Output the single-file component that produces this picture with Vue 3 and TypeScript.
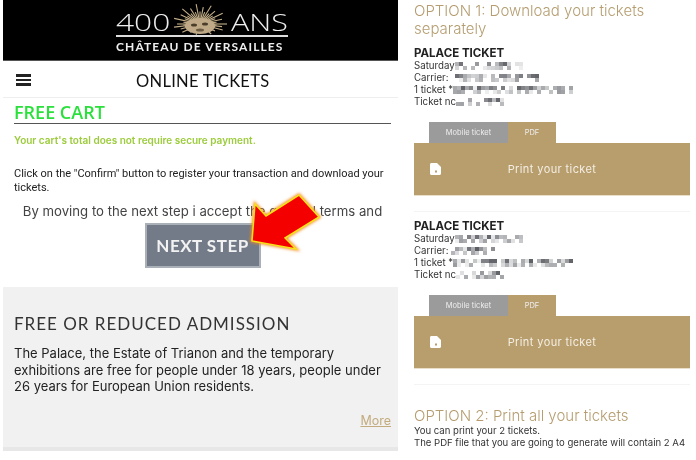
<script setup lang="ts">
interface Cell { x: number; y: number; o: number }
interface Line { label: string; width: number; cells: Cell[] }
interface Ticket { id: number; lines: Line[] }

function mosaic(seed: number, width: number): Cell[] {
  const cells: Cell[] = []
  let s = seed
  for (const y of [2, 6]) {
    for (let x = 0; x < width; x += 4) {
      s = (s * 9301 + 49297) % 233280
      const r = s / 233280
      if (r > 0.4) cells.push({ x, y, o: 0.08 + (r - 0.4) * (y === 2 ? 1.2 : 0.7) })
    }
  }
  return cells
}

const tickets: Ticket[] = [
  { id: 1, lines: [
    { label: 'Saturday', width: 68, cells: mosaic(11, 68) },
    { label: 'Carrier: ', width: 88, cells: mosaic(23, 88) },
    { label: '1 ticket *', width: 120, cells: mosaic(37, 120) },
    { label: 'Ticket nc', width: 48, cells: mosaic(51, 48) },
  ] },
  { id: 2, lines: [
    { label: 'Saturday', width: 68, cells: mosaic(61, 68) },
    { label: 'Carrier: ', width: 44, cells: mosaic(73, 44) },
    { label: '1 ticket *', width: 120, cells: mosaic(87, 120) },
    { label: 'Ticket nc', width: 48, cells: mosaic(99, 48) },
  ] },
]

const rays = Array.from({ length: 44 }, (_, i) => {
  const a = (Math.PI * 2 * i) / 44
  const r = i % 2 ? 0.62 : i % 4 ? 0.85 : 1
  const sin = Math.sin(a)
  return {
    x2: 28 + Math.cos(a) * 27 * r,
    y2: 20 + sin * (sin < 0 ? 20 : 11) * r,
  }
})
</script>

<template>
  <div class="page">
    <section class="left">
      <header class="brand">
        <div class="logo">
          <div class="logo-top">
            <span class="num">400</span>
            <svg class="sun" width="56" height="31" viewBox="0 0 56 31">
              <line v-for="(r, i) in rays" :key="i" x1="28" y1="20" :x2="r.x2" :y2="r.y2" stroke="#c4af88" stroke-width="1.1" />
              <ellipse cx="28" cy="22" rx="15" ry="8" fill="#bfa987" />
              <ellipse cx="22" cy="21" rx="3" ry="1.500" fill="#4a3e2a" />
              <ellipse cx="33" cy="20" rx="3" ry="1.500" fill="#4a3e2a" />
              <ellipse cx="28" cy="26" rx="4" ry="1.500" fill="#6a5b42" />
            </svg>
            <span class="ans">ANS</span>
          </div>
          <div class="logo-sub">CHÂTEAU DE VERSAILLES</div>
        </div>
      </header>

      <nav class="nav">
        <span class="burger"><i></i><i></i><i></i></span>
        <span class="nav-title">ONLINE TICKETS</span>
      </nav>

      <main class="content">
        <h1 class="cart">FREE CART</h1>
        <p class="notice">Your cart's total does not require secure payment.</p>
        <p class="confirm">Click on the "Confirm" button to register your transaction and download your tickets.</p>
        <div class="terms-wrap">
          <p class="terms">By moving to the next step i accept the general terms and conditions of sale</p>
          <button class="next">NEXT STEP</button>
          <svg class="arrow" width="80" height="65" viewBox="245 190 80 65">
            <defs>
              <filter id="glow" x="-20%" y="-20%" width="140%" height="140%">
                <feGaussianBlur stdDeviation="1.4" />
              </filter>
            </defs>
            <polygon points="252,241 255,204 266,216 299,195 319,217 285,238 296,249" fill="#f58a1e" stroke="#f58a1e" stroke-width="3" filter="url(#glow)" />
            <polygon points="252,241 255,204 266,216 299,195 319,217 285,238 296,249" fill="#f40000" stroke="#f6e21a" stroke-width="1.5" />
          </svg>
        </div>
      </main>

      <aside class="admission">
        <h2>FREE OR REDUCED ADMISSION</h2>
        <p>The Palace, the Estate of Trianon and the temporary exhibitions are free for people under 18 years, people under 26 years for European Union residents.</p>
        <a class="more">More</a>
      </aside>
    </section>

    <section class="right">
      <h2 class="option first">OPTION 1: Download your tickets separately</h2>
      <article v-for="t in tickets" :key="t.id" class="ticket">
        <h3>PALACE TICKET</h3>
        <div v-for="l in t.lines" :key="l.label" class="line">
          <span>{{ l.label }}</span>
          <svg class="blur" :width="l.width" height="12" :viewBox="`0 0 ${l.width} 12`">
            <rect v-for="(c, i) in l.cells" :key="i" :x="c.x" :y="c.y" width="4" height="4" fill="#33363d" :opacity="c.o" />
          </svg>
        </div>
        <div class="tabs">
          <span class="tab mobile">Mobile ticket</span>
          <span class="tab pdf">PDF</span>
        </div>
        <div class="print">
          <svg class="file" width="11" height="12" viewBox="0 0 11 12">
            <path d="M1.5 0H7L11 4V10.5C11 11.4 10.4 12 9.5 12H1.5C.6 12 0 11.4 0 10.5V1.500C0 .6.6 0 1.500 0Z" fill="#fff" />
            <rect x="5" y="7.500" width="2" height="2" fill="#b89d6d" />
          </svg>
          <span>Print your ticket</span>
        </div>
      </article>
      <h2 class="option second">OPTION 2: Print all your tickets</h2>
      <p class="small">You can print your 2 tickets.</p>
      <p class="small nowrap">The PDF file that you are going to generate will contain 2 A4</p>
    </section>
  </div>
</template>

<style>
html, body { margin: 0; background: #fff; overflow: hidden; }
</style>

<style scoped>
.page {
  width: 696px;
  height: 460px;
  display: flex;
  overflow: hidden;
  background: #fff;
  font-family: Inter, "Liberation Sans", sans-serif;
  filter: blur(0.35px);
}
.left {
  width: 395px;
  margin-left: 3px;
  flex: none;
  display: flex;
  flex-direction: column;
}
.brand {
  height: 61px;
  background: #000;
  display: flex;
  justify-content: center;
  box-sizing: border-box;
  border-bottom: 1px solid #555;
}
.logo { width: 172px; margin-left: 3px; padding-top: 4px; color: #eee; }
.logo-top {
  display: flex;
  align-items: flex-end;
  justify-content: space-between;
  height: 31px;
  border-bottom: 2px solid #ddd;
  font-family: "Open Sans", sans-serif;
  font-weight: 300;
  font-size: 24px;
  line-height: 24px;
}
.num, .ans { display: inline-block; padding-bottom: 1px; }
.num { transform: scaleX(1.32); transform-origin: left center; }
.ans { transform: scaleX(1.27); transform-origin: right center; }
.sun { flex: none; }
.logo-sub {
  font-family: Lato, sans-serif;
  font-weight: 700;
  font-size: 12px;
  line-height: 15px;
  letter-spacing: 1.1px;
  white-space: nowrap;
  margin-top: 2px;
}
.nav {
  height: 37px;
  display: flex;
  align-items: center;
  border-bottom: 1px solid #eee;
  box-sizing: border-box;
  padding-left: 13px;
}
.burger { width: 15px; display: flex; flex-direction: column; gap: 2px; margin-top: 2px; }
.burger i { display: block; height: 2.500px; background: #222; }
.nav-title {
  margin-left: 105px;
  font-family: Lato, sans-serif;
  font-size: 16.500px;
  letter-spacing: 0.3px;
  color: #111;
  margin-top: 4px;
}
.content { padding: 0 7px 0 11px; height: 180px; box-sizing: border-box; }
.cart {
  margin: 0;
  height: 25px;
  font-size: 18px;
  line-height: 29px;
  font-weight: 600;
  font-family: "Open Sans", sans-serif;
  color: #2be03c;
  border-bottom: 1px solid #555;
  box-sizing: content-box;
}
.notice {
  margin: 10px 0 0;
  font-size: 10px;
  line-height: 13px;
  font-weight: 600;
  color: #9ccc3c;
}
.confirm {
  margin: 20px 0 0;
  font-family: Roboto, sans-serif;
  font-size: 11px;
  line-height: 14px;
  color: #222;
}
.terms-wrap { position: relative; margin-top: 7px; display: flex; flex-direction: column; align-items: center; }
.terms {
  margin: 0;
  height: 21px;
  overflow: hidden;
  font-size: 13.200px;
  line-height: 18px;
  text-align: center;
  color: #444;
  width: 370px;
}
.next {
  width: 116px;
  height: 45px;
  background: #737a88;
  border: 2px solid #aab0b8;
  color: #f2f2f2;
  font-family: Lato, sans-serif;
  font-weight: 700;
  font-size: 17px;
  letter-spacing: 0.5px;
  padding: 0;
}
.arrow { position: absolute; left: 231px; top: -12px; width: 80px; height: 65px; overflow: visible; }
.admission {
  height: 164px;
  margin-top: 9px;
  background: #f1f1f1;
  border-bottom: 4px solid #e7e7e7;
  box-sizing: border-box;
  padding: 0 7px 0 11px;
  display: flex;
  flex-direction: column;
}
.admission h2 {
  margin: 26px 0 0;
  font-family: Lato, sans-serif;
  font-weight: 400;
  font-size: 17px;
  line-height: 22px;
  letter-spacing: 1px;
  color: #333;
}
.admission p {
  margin: 10px 0 0;
  font-size: 13px;
  line-height: 16.500px;
  color: #222;
}
.more {
  align-self: flex-end;
  margin-top: 18px;
  font-size: 12.500px;
  line-height: 16px;
  color: #c3ab7e;
  text-decoration: underline;
}
.right {
  width: 276px;
  margin-left: 16px;
  flex: none;
}
.option {
  margin: 0;
  font-weight: 300;
  font-size: 15px;
  line-height: 18px;
  color: #b59d70;
}
.first { padding-top: 2px; }
.ticket { padding-bottom: 15px; border-bottom: 1px solid #f4f4f4; }
.first + .ticket { margin-top: 8px; }
.ticket + .ticket { padding-top: 7px; }
.ticket h3 {
  margin: 0;
  font-size: 11.500px;
  line-height: 14px;
  font-weight: 700;
  color: #222;
}
.line { display: flex; font-size: 9.700px; line-height: 12px; color: #333; white-space: pre; align-items: flex-start; }
.blur { flex: none; }
.tabs { display: flex; margin: 14px 0 0 15px; height: 21px; }
.tab { display: flex; align-items: center; justify-content: center; font-size: 7.500px; color: #eee; }
.mobile { width: 79px; background: #9b9b9b; }
.pdf { width: 48px; background: #b89d6d; }
.print {
  height: 53px;
  box-sizing: border-box;
  background: #b89d6d;
  border-bottom: 1px solid #eadfca;
  display: flex;
  align-items: center;
  justify-content: center;
  color: #f3eee3;
  font-size: 11px;
  letter-spacing: 0.4px;
  position: relative;
}
.print .file { position: absolute; left: 16px; top: 20px; }
.second { margin-top: 22px; }
.small { margin: 0; font-size: 9.550px; line-height: 12px; color: #333; }
.nowrap { white-space: nowrap; }
</style>
